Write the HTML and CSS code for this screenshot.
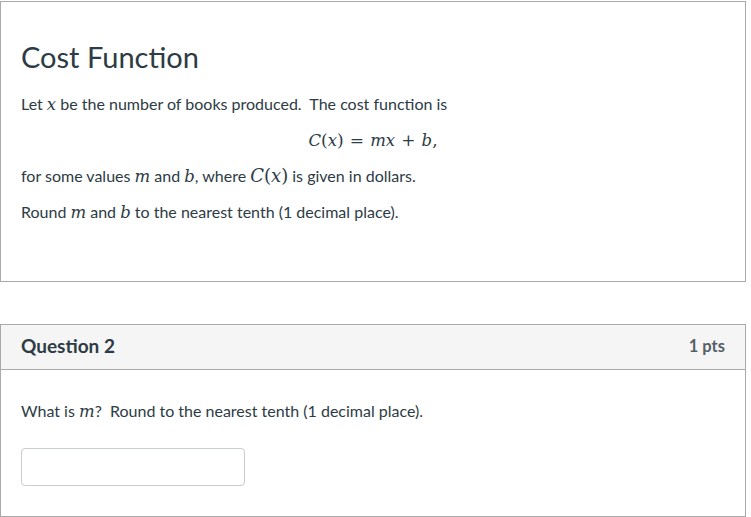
FILE: index.html
```html
<!DOCTYPE html>
<html lang="en">

<head>
    <meta charset="UTF-8">
    <meta name="viewport" content="width=device-width, initial-scale=1.0">
    <title>Quiz</title>
    <link rel="stylesheet" href="styles.css">
</head>

<body>
    <div class="quiz">
        <div class="text-block">
            <h2>Cost Function</h2>
            <p>Let <span class="math">x</span> be the number of books produced.&nbsp; The cost function is</p>
            <p class="display-math"><span class="math">C</span><span class="upright">(</span><span class="math">x</span><span class="upright">)</span> <span class="upright op">=</span> <span class="math">mx</span> <span class="upright op">+</span> <span class="math">b</span><span class="upright">,</span></p>
            <p>for some values <span class="math">m</span> and <span class="math">b</span>, where <span class="math big">C</span><span class="upright big">(</span><span class="math big">x</span><span class="upright big">)</span> is given in dollars.</p>
            <p>Round <span class="math">m</span> and <span class="math">b</span> to the nearest tenth (1 decimal place).</p>
        </div>

        <div class="question">
            <div class="question-header">
                <span class="question-name">Question 2</span>
                <span class="points">1 pts</span>
            </div>
            <div class="question-body">
                <p>What is <span class="math">m</span>?&nbsp; Round to the nearest tenth (1 decimal place).</p>
                <input type="text" class="answer">
            </div>
        </div>
    </div>
</body>

</html>
```

FILE: styles.css
```css
body {
    font-family: Lato, "Open Sans", sans-serif;
    color: #2d3b45;
    background: white;
    margin: 0;
    padding: 0;
}

.quiz {
    width: 746px;
    padding-top: 1px;
}

.text-block {
    border: 1px solid #aaaaaa;
    height: 279px;
    padding: 0 20px;
    box-sizing: content-box;
}

.text-block h2 {
    font-size: 29px;
    font-weight: normal;
    line-height: 34px;
    margin: 38px 0 19px 0;
}

p {
    font-size: 16px;
    line-height: 22px;
    margin: 0 0 14px 0;
}

.math {
    font-family: "DejaVu Serif", serif;
    font-style: italic;
    font-size: 16.5px;
    line-height: 1;
}

.upright {
    font-family: "DejaVu Serif", serif;
    font-size: 17px;
    line-height: 1;
}

.big {
    font-size: 18px;
}

.op {
    padding: 0 2px;
}

.display-math {
    text-align: center;
}

.question {
    margin-top: 42px;
    border: 1px solid #aaaaaa;
}

.question-header {
    display: flex;
    justify-content: space-between;
    align-items: center;
    height: 45px;
    padding: 0 20px 3px 20px;
    box-sizing: border-box;
    background: #f5f5f5;
    border-bottom: 1px solid #aaaaaa;
}

.question-name {
    font-size: 19px;
    font-weight: bold;
}

.points {
    font-size: 16.5px;
    font-weight: bold;
    color: #555f66;
}

.question-body {
    padding: 30px 20px 30px 20px;
}

.question-body p {
    margin-bottom: 26px;
}

.answer {
    display: block;
    width: 224px;
    height: 38px;
    box-sizing: border-box;
    border: 1px solid #c7cdd1;
    border-radius: 4px;
    margin: 0;
}
```
